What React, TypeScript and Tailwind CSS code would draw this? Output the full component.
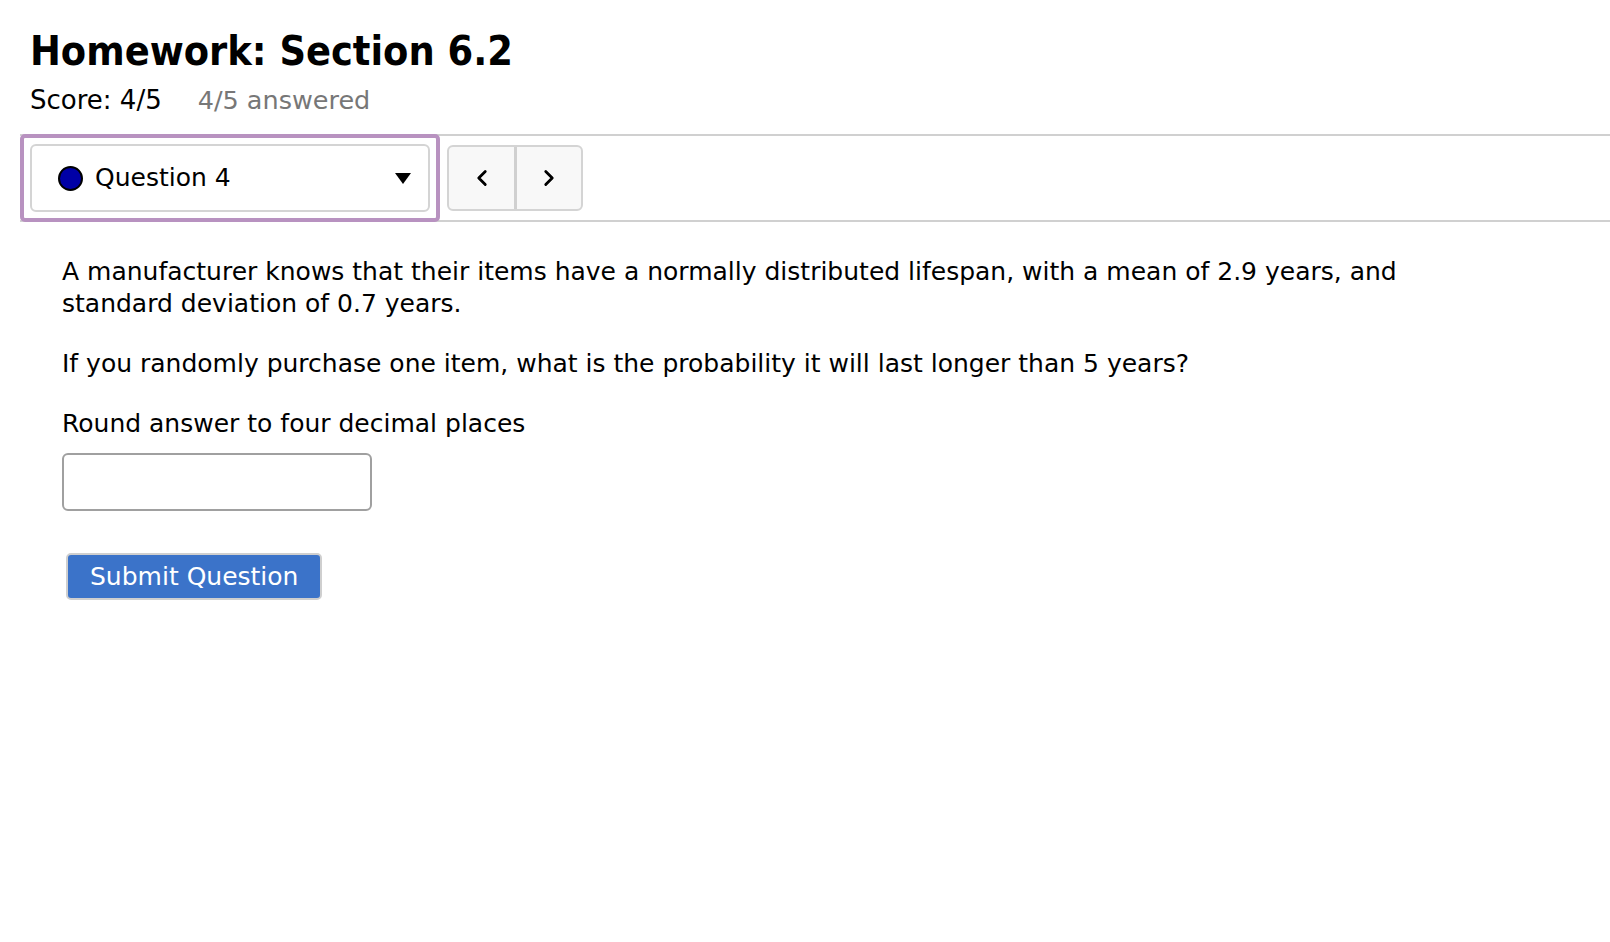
import { ChevronLeft, ChevronRight } from "lucide-react"

export default function App() {
  return (
    <div className="min-h-screen bg-white text-black font-['DejaVu_Sans',sans-serif]">
      <div className="pl-[30px] pt-[24px]">
        <h1 className="font-['DejaVu_Sans_Condensed','DejaVu_Sans',sans-serif] [font-stretch:condensed] text-[41px] font-bold leading-[54px]">
          Homework: Section 6.2
        </h1>
        <div className="text-[26px] leading-[36px] mt-[4px]">
          Score: 4/5
          <span className="ml-[36px] text-[#777] text-[25.5px]">4/5 answered</span>
        </div>
      </div>

      <div className="mt-[16px] ml-[20px] flex items-stretch border-y-2 border-[#d0d0d0]">
        <div className="-my-[2px] border-4 border-[#b892c0] rounded-[5px] p-[6px] w-[420px]">
          <div className="h-[68px] border-2 border-[#d4d4d4] rounded-[6px] bg-white flex items-center pl-[26px] pr-[17px]">
            <span className="w-[25px] h-[25px] rounded-full bg-[#0000a6] border-2 border-black" />
            <span className="ml-[12px] text-[25px]">Question 4</span>
            <span className="ml-auto w-0 h-0 border-l-[8px] border-r-[8px] border-t-[11px] border-l-transparent border-r-transparent border-t-black" />
          </div>
        </div>
        <div className="ml-[7px] my-[9px] flex border-2 border-[#d4d4d4] rounded-[6px] bg-[#f8f8f8] overflow-hidden">
          <button className="w-[65px] flex items-center justify-center">
            <ChevronLeft size={26} strokeWidth={2.6} />
          </button>
          <div className="w-[3px] bg-[#d0d0d0]" />
          <button className="w-[64px] flex items-center justify-center">
            <ChevronRight size={26} strokeWidth={2.6} />
          </button>
        </div>
      </div>

      <div className="pl-[62px] pt-[34px] max-w-[1470px] text-[25px] leading-[32px]">
        <p>
          A manufacturer knows that their items have a normally distributed lifespan, with a mean of 2.9 years, and
          standard deviation of 0.7 years.
        </p>
        <p className="mt-[28px]">
          If you randomly purchase one item, what is the probability it will last longer than 5 years?
        </p>
        <p className="mt-[28px]">Round answer to four decimal places</p>
        <input
          className="mt-[13px] block w-[310px] h-[58px] border-2 border-[#a0a0a0] rounded-[6px] px-3 text-[25px] outline-none"
        />
        <button className="mt-[42px] ml-[4px] h-[47px] px-[22px] bg-[#3b73c9] border-2 border-[#cfcfcf] rounded-[5px] text-white text-[25px] leading-none">
          Submit Question
        </button>
      </div>
    </div>
  )
}
